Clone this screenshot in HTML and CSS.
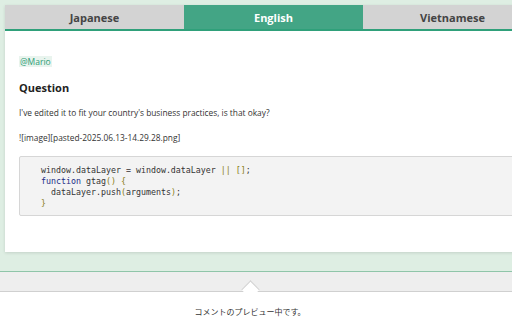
FILE: index.html
```html
<!DOCTYPE html>
<html>
<head>
<meta charset="utf-8">
<link rel="stylesheet" href="styles.css">
</head>
<body>
<div class="stage">
  <div class="card">
    <div class="tabs">
      <div class="tab">Japanese</div>
      <div class="tab active">English</div>
      <div class="tab">Vietnamese</div>
    </div>
    <div class="panel">
      <p class="mention"><span>@Mario</span></p>
      <h2 class="title">Question</h2>
      <p class="text">I've edited it to fit your country's business practices, is that okay?</p>
      <p class="text">![image][pasted-2025.06.13-14.29.28.png]</p>
      <pre class="code"><code>window.dataLayer = window.dataLayer <span class="op">||</span> <span class="op">[]</span>;
<span class="kw">function</span> gtag<span class="op">()</span> <span class="op">{</span>
  dataLayer.push<span class="op">(</span>arguments<span class="op">)</span>;
<span class="op">}</span></code></pre>
    </div>
  </div>
</div>
<div class="bar"><span class="notch"></span></div>
<p class="status">コメントのプレビュー中です。</p>
</body>
</html>
```
FILE: styles.css
```css
html, body {
  margin: 0;
  padding: 0;
}
body {
  width: 512px;
  height: 320px;
  overflow: hidden;
  background: #ffffff;
  font-family: "Open Sans", "Noto Sans CJK JP", sans-serif;
  color: #333333;
}
.stage {
  background: #deeee3;
  padding: 5px 0 19px 5px;
  border-bottom: 1px solid #8fc5a9;
}
.card {
  width: 537px;
  background: #ffffff;
  box-shadow: 0 1px 3px rgba(0, 0, 0, 0.12);
}
.tabs {
  display: flex;
  border-bottom: 2px solid #2fa07a;
}
.tab {
  flex: 1;
  height: 24px;
  display: flex;
  align-items: center;
  justify-content: center;
  background: #d3d3d3;
  color: #444444;
  font-weight: 700;
  font-size: 11px;
}
.tab.active {
  background: #43a585;
  color: #ffffff;
}
.panel {
  padding: 25px 14px 36px 14px;
}
.mention {
  margin: 0;
  font-size: 8.5px;
  line-height: 12px;
}
.mention span {
  color: #2e9e77;
  background: #e9f4ee;
  padding: 0 1px;
}
.title {
  margin: 13px 0 0 0;
  font-size: 11px;
  line-height: 14px;
  font-weight: 700;
  color: #222222;
}
.text {
  margin: 11px 0 0 0;
  font-size: 8.35px;
  line-height: 14px;
  color: #333333;
}
.code {
  margin: 11px 0 0 0;
  background: #f3f3f3;
  border: 1px solid #d6d6d6;
  border-radius: 2px;
  padding: 8px 12px 6px 21px;
  font-family: "DejaVu Sans Mono", monospace;
  font-size: 8.3px;
  line-height: 11px;
  color: #333333;
}
.code .op {
  color: #8a7d18;
}
.code .kw {
  color: #1c2f86;
}
.bar {
  position: relative;
  height: 19px;
  background: #eeeeee;
  border-bottom: 1px solid #d0d0d0;
}
.notch {
  position: absolute;
  left: 244px;
  bottom: -5px;
  width: 12px;
  height: 12px;
  background: #ffffff;
  border-left: 1px solid #d0d0d0;
  border-top: 1px solid #d0d0d0;
  transform: rotate(45deg);
}
.status {
  margin: 14px 0 0 0;
  text-align: center;
  font-size: 8px;
  line-height: 12px;
  color: #333333;
  font-family: "Noto Sans CJK JP", sans-serif;
  padding-right: 12px;
}
```
